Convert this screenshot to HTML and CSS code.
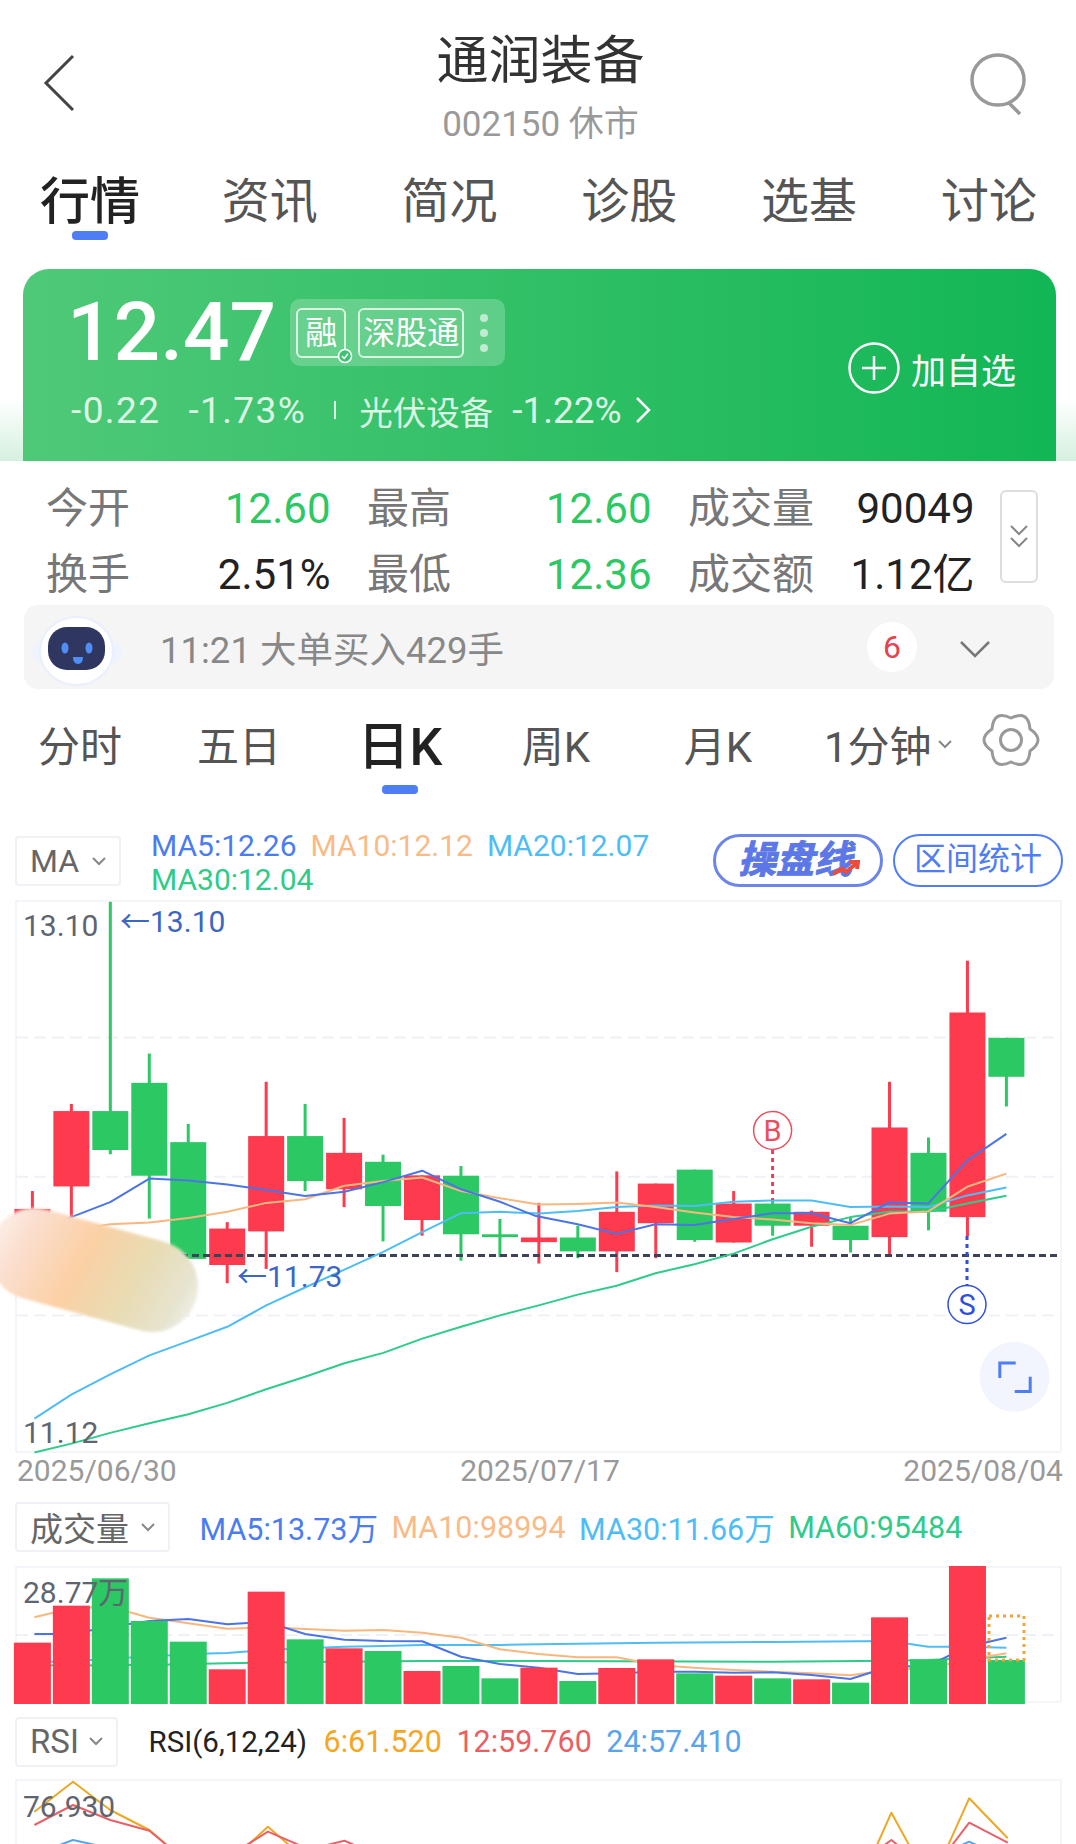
FILE: index.html
```html
<!DOCTYPE html>
<html lang="zh-CN">
<head>
    <meta charset="UTF-8">
    <meta name="viewport" content="width=device-width, initial-scale=1.0">
    <title>通润装备 002150</title>
    <link rel="stylesheet" href="styles.css">
</head>
<body>

    <!-- Title bar -->
    <header class="top-bar">
        <svg class="back-icon" width="34" height="60" viewBox="0 0 34 60">
            <polyline points="30,3 3,30 30,57" />
        </svg>
        <div class="title-box">
            <div class="title">通润装备</div>
            <div class="subtitle">002150 休市</div>
        </div>
        <svg class="search-icon" width="60" height="66" viewBox="0 0 60 66">
            <ellipse cx="28" cy="28" rx="26" ry="25" />
            <line x1="39" y1="51" x2="50" y2="62" />
        </svg>
    </header>

    <nav class="tabs">
        <div class="tab active">行情<span class="tab-line"></span></div>
        <div class="tab">资讯</div>
        <div class="tab">简况</div>
        <div class="tab">诊股</div>
        <div class="tab">选基</div>
        <div class="tab">讨论</div>
    </nav>

    <!-- Price card -->
    <section class="hero-wrap">
        <div class="hero">
            <div class="hero-left">
                <div class="price-row">
                    <div class="price">12.47</div>
                    <div class="tag-pill">
                        <span class="tag tag-rong">融
                            <svg class="tag-check" width="16" height="16" viewBox="0 0 16 16">
                                <circle cx="8" cy="8" r="6.5" />
                                <polyline points="5,8 7.2,10.4 11,5.8" />
                            </svg>
                        </span>
                        <span class="tag">深股通</span>
                        <span class="tag-dots"><i></i><i></i><i></i></span>
                    </div>
                </div>
                <div class="change-row">
                    <span class="chg">-0.22</span>
                    <span class="chg">-1.73%</span>
                    <span class="chg-sep"></span>
                    <span class="sector">光伏设备</span>
                    <span class="sector-chg">-1.22%</span>
                    <svg width="16" height="28" viewBox="0 0 16 28">
                        <polyline class="white-line" points="2,2 14,14 2,26" />
                    </svg>
                </div>
            </div>
            <div class="add-btn">
                <svg width="52" height="52" viewBox="0 0 52 52">
                    <circle class="white-line" cx="26" cy="26" r="24.5" />
                    <line class="white-line" x1="14" y1="26" x2="38" y2="26" />
                    <line class="white-line" x1="26" y1="14" x2="26" y2="38" />
                </svg>
                <span>加自选</span>
            </div>
        </div>
    </section>

    <!-- Quote numbers -->
    <section class="stats">
        <div class="stats-grid">
            <div class="stat"><span class="stat-label">今开</span><span class="down">12.60</span></div>
            <div class="stat"><span class="stat-label">最高</span><span class="down">12.60</span></div>
            <div class="stat"><span class="stat-label">成交量</span><span>90049</span></div>
            <div class="stat"><span class="stat-label">换手</span><span>2.51%</span></div>
            <div class="stat"><span class="stat-label">最低</span><span class="down">12.36</span></div>
            <div class="stat"><span class="stat-label">成交额</span><span>1.12亿</span></div>
        </div>
        <div class="stats-toggle">
            <svg width="20" height="26" viewBox="0 0 20 26">
                <polyline points="2,2 10,10 18,2" />
                <polyline points="2,14 10,22 18,14" />
            </svg>
        </div>
    </section>

    <div class="notice">
        <svg class="robot" width="92" height="92" viewBox="0 0 92 92">
            <rect class="robot-ear" x="1" y="41" width="90" height="20" rx="10" />
            <ellipse class="robot-shell" cx="45.5" cy="50" rx="36.5" ry="34" />
            <rect class="robot-head" x="17" y="26" width="57" height="43" rx="19" />
            <ellipse class="robot-eye" cx="34" cy="47" rx="3.5" ry="5.5" />
            <ellipse class="robot-eye" cx="58" cy="47" rx="3.5" ry="5.5" />
            <path class="robot-eye" d="M42 56 h10 q0 7 -5 7 q-5 0 -5 -7 z" />
        </svg>
        <span class="notice-text">11:21 大单买入429手</span>
        <span class="notice-badge">6</span>
        <svg class="notice-arrow" width="32" height="18" viewBox="0 0 32 18">
            <polyline points="2,2 16,16 30,2" />
        </svg>
    </div>

    <!-- Chart periods -->
    <nav class="periods">
        <div class="period p-min">分时</div>
        <div class="period p-five">五日</div>
        <div class="period p-day active">日K<span class="tab-line"></span></div>
        <div class="period p-week">周K</div>
        <div class="period p-month">月K</div>
        <div class="period p-one">1分钟
            <svg class="small-arrow" width="14" height="9" viewBox="0 0 14 9">
                <polyline points="1,1 7,7 13,1" />
            </svg>
        </div>
        <svg class="gear" width="60" height="60" viewBox="-30 -30 60 60">
            <path d="M19 -11 Q35 0 19 11 Q17.5 30.3 0 22 Q-17.5 30.3 -19 11 Q-35 0 -19 -11 Q-17.5 -30.3 0 -22 Q17.5 -30.3 19 -11 Z" />
            <circle r="10.5" />
        </svg>
    </nav>

    <div class="ma-row">
        <div class="picker picker-ma">MA
            <svg class="picker-arrow" width="14" height="9" viewBox="0 0 14 9"><polyline points="1,1 7,7 13,1" /></svg>
        </div>
        <div class="ma-values">
            <span class="c-blue">MA5:12.26</span>
            <span class="c-orange">MA10:12.12</span>
            <span class="c-sky">MA20:12.07</span>
            <span class="c-teal">MA30:12.04</span>
        </div>
        <div class="pill-btn pill-line">
            <span class="pill-line-text">操盘线</span>
            <svg class="pill-line-arrow" width="28" height="16" viewBox="0 0 28 16">
                <polyline points="1,14 10,9 14,12 25,3" />
                <polyline points="18,2 26,2 25,9" />
            </svg>
        </div>
        <div class="pill-btn pill-range">区间统计</div>
    </div>

    <!-- K line chart, bars and lines are added by chart.js -->
    <svg id="kline" class="chart" width="1076" height="554" viewBox="0 0 1076 554">
        <defs>
            <linearGradient id="smudgeFill" gradientUnits="userSpaceOnUse" x1="0" y1="310" x2="199" y2="420">
                <stop offset="0" stop-color="#fdf0ea" />
                <stop offset="0.15" stop-color="#fbdfd0" />
                <stop offset="0.42" stop-color="#fbd0a4" />
                <stop offset="0.68" stop-color="#e8dcb4" />
                <stop offset="0.88" stop-color="#e6e4d0" />
                <stop offset="1" stop-color="#f3f3ef" />
            </linearGradient>
            <filter id="smudgeBlur" filterUnits="userSpaceOnUse" x="-20" y="260" width="260" height="220">
                <feGaussianBlur stdDeviation="1.5" />
            </filter>
        </defs>
        <g id="klineBody"></g>
        <line class="last-price" x1="16" y1="355.4" x2="1060" y2="355.4" />
        <g id="klineLines"></g>

        <!-- Buy and sell marks -->
        <line class="mark-b" x1="772.6" y1="250" x2="772.6" y2="300" />
        <circle class="mark-b-ring" cx="772.6" cy="230.4" r="19" />
        <text class="mark-b-text" x="772.6" y="240.5">B</text>
        <line class="mark-s" x1="967" y1="336" x2="967" y2="386" />
        <circle class="mark-s-ring" cx="967" cy="404.6" r="19" />
        <text class="mark-s-text" x="967" y="414.6">S</text>

        <!-- Blurred out part of the shot -->
        <path class="smudge" d="M35 354 L152 386" />

        <text class="axis-label" x="23" y="36">13.10</text>
        <text class="axis-label" x="23" y="543">11.12</text>
        <text class="extreme-label" x="120" y="32">←13.10</text>
        <text class="extreme-label" x="237" y="387">←11.73</text>

        <circle class="expand-bg" cx="1014.6" cy="476.8" r="35" />
        <polyline class="expand-icon" points="999.8,477.9 999.8,462.9 1015.7,462.9" />
        <polyline class="expand-icon" points="1014.7,491.4 1030.2,491.4 1030.2,476.8" />
    </svg>

    <div class="dates">
        <span>2025/06/30</span>
        <span>2025/07/17</span>
        <span>2025/08/04</span>
    </div>

    <div class="ind-row vol-row">
        <div class="picker picker-vol">成交量
            <svg class="picker-arrow" width="14" height="9" viewBox="0 0 14 9"><polyline points="1,1 7,7 13,1" /></svg>
        </div>
        <span class="c-blue">MA5:13.73万</span>
        <span class="c-orange">MA10:98994</span>
        <span class="c-sky">MA30:11.66万</span>
        <span class="c-teal">MA60:95484</span>
    </div>

    <svg id="volume" class="chart" width="1076" height="140" viewBox="0 0 1076 140">
        <g id="volumeBody"></g>
        <rect class="vol-box" x="989" y="50" width="35" height="44" />
        <text class="axis-label" x="23" y="37">28.77万</text>
    </svg>

    <div class="ind-row rsi-row">
        <div class="picker picker-rsi">RSI
            <svg class="picker-arrow" width="14" height="9" viewBox="0 0 14 9"><polyline points="1,1 7,7 13,1" /></svg>
        </div>
        <span class="rsi-name">RSI(6,12,24)</span>
        <span class="c-rsi6">6:61.520</span>
        <span class="c-rsi12">12:59.760</span>
        <span class="c-rsi24">24:57.410</span>
    </div>

    <svg id="rsi" class="chart" width="1076" height="65" viewBox="0 0 1076 65">
        <g id="rsiBody"></g>
        <text class="axis-label" x="23" y="38">76.930</text>
    </svg>

    <script src="chart.js"></script>
</body>
</html>
```

FILE: styles.css
```css
* {
    box-sizing: border-box;
}
body {
    margin: 0;
    width: 1076px;
    height: 1844px;
    overflow: hidden;
    background-color: #fff;
    color: #222;
    font-family: Roboto, "Noto Sans CJK SC", sans-serif;
}
svg {
    display: block;
    flex-shrink: 0;
}
polyline, path, line, circle, ellipse {
    fill: none;
}

/* Title bar */
.top-bar {
    display: flex;
    justify-content: space-between;
    height: 145px;
    padding: 30px 46px 0 43px;
}
.back-icon {
    margin-top: 23px;
}
.back-icon polyline {
    stroke: #444;
    stroke-width: 3;
}
.search-icon {
    margin-top: 22px;
}
.search-icon ellipse, .search-icon line {
    stroke: #999;
    stroke-width: 3.5;
}
.title-box {
    flex: 1;
    text-align: center;
    margin-left: 34px;
}
.title {
    font-size: 52px;
    line-height: 64px;
    color: #333;
}
.subtitle {
    font-size: 35px;
    line-height: 40px;
    margin-top: 11px;
    color: #999;
}
.tabs {
    display: flex;
    padding-top: 28px;
    height: 95px;
}
.tab {
    flex: none;
    width: 179.8px;
    font-size: 48px;
    line-height: 58px;
    text-align: center;
    color: #555;
}
.tab.active {
    font-size: 50px;
    font-weight: 500;
    color: #222;
}
.tab-line {
    display: block;
    width: 36px;
    height: 9px;
    margin: 0 auto;
    border-radius: 4px;
    background-color: #4f7df3;
}

/* Price card */
.hero-wrap {
    padding: 29px 20px 0 23px;
    height: 221px;
    background: linear-gradient(to bottom, #fff 0, #fff 158px, #d5f1df 221px);
}
.hero {
    display: flex;
    justify-content: space-between;
    align-items: flex-start;
    height: 192px;
    padding: 30px 40px 0 48px;
    border-radius: 26px 26px 0 0;
    background: linear-gradient(to right, #4fc978, #12b654);
    color: #fff;
}
.price-row {
    display: flex;
    align-items: center;
    height: 67px;
}
.price {
    margin-left: -4px;
    font-size: 82px;
    font-weight: 500;
    line-height: 67px;
}
.tag-pill {
    display: flex;
    align-items: center;
    gap: 12px;
    height: 67px;
    margin-left: 14px;
    padding: 0 17px 0 6px;
    border-radius: 10px;
    background-color: rgba(255, 255, 255, 0.22);
}
.tag {
    position: relative;
    height: 50px;
    padding: 0 3px;
    border: 2px solid rgba(255, 255, 255, 0.75);
    border-radius: 6px;
    font-size: 32px;
    line-height: 46px;
}
.tag-rong {
    padding: 0 7px;
}
.tag-check {
    position: absolute;
    right: -9px;
    bottom: -8px;
}
.tag-check circle, .tag-check polyline {
    stroke: #fff;
    stroke-width: 1.5;
}
.tag-check circle {
    fill: #3fc172;
}
.tag-dots {
    display: flex;
    flex-direction: column;
    gap: 7px;
    margin-left: 4px;
}
.tag-dots i {
    width: 8px;
    height: 8px;
    border-radius: 50%;
    background-color: rgba(255, 255, 255, 0.6);
}
.change-row {
    display: flex;
    align-items: center;
    height: 44px;
    margin-top: 22px;
    color: #dcf6e5;
    font-size: 37px;
}
.chg {
    margin-right: 28px;
    letter-spacing: 1.4px;
}
.chg-sep {
    width: 2px;
    height: 18px;
    margin-right: 23px;
    background-color: #dcf6e5;
}
.sector {
    font-size: 33.5px;
    margin-right: 19px;
}
.sector-chg {
    margin-right: 13px;
    font-size: 37px;
}
.white-line {
    stroke: #fff;
    stroke-width: 2.5;
}
.add-btn {
    display: flex;
    align-items: center;
    gap: 11px;
    margin-top: 43px;
    font-size: 35px;
}

/* Quote numbers */
.stats {
    display: flex;
    height: 144px;
    padding: 15px 0 0 46px;
    font-size: 42px;
}
.stats-grid {
    display: grid;
    grid-template-columns: 284.5px 284.5px 286.5px;
    grid-auto-rows: 66px;
    column-gap: 36.5px;
}
.stat {
    display: flex;
    justify-content: space-between;
    line-height: 66px;
    color: #222;
}
.stat-label {
    color: #777;
    font-size: 42px;
}
.down {
    color: #2cc864;
}
.stats-toggle {
    display: flex;
    align-items: center;
    justify-content: center;
    width: 38px;
    height: 93px;
    margin: 14px 0 0 25px;
    border: 2px solid #ddd;
    border-radius: 6px;
}
.stats-toggle polyline {
    stroke: #888;
    stroke-width: 2;
}
.notice {
    display: flex;
    align-items: center;
    height: 84px;
    margin: 0 22px 0 24px;
    padding-left: 7px;
    border-radius: 14px;
    background-color: #f5f5f6;
}
.robot-ear {
    fill: #eef3fd;
}
.robot-shell {
    fill: #fff;
    stroke: #e9effc;
    stroke-width: 2;
}
.robot-head {
    fill: #2f3760;
}
.robot-eye {
    fill: #4f8ff5;
}
.notice-text {
    margin-left: 37px;
    font-size: 36.5px;
    color: #888;
}
.notice-badge {
    width: 50px;
    height: 50px;
    margin-left: auto;
    border-radius: 50%;
    background-color: #fff;
    color: #e8414f;
    font-size: 32px;
    line-height: 50px;
    text-align: center;
}
.notice-arrow {
    margin: 4px 63px 0 42px;
}
.notice-arrow polyline {
    stroke: #777;
    stroke-width: 2.5;
}

/* Chart periods */
.periods {
    display: flex;
    height: 147px;
    padding-top: 29px;
    font-size: 42px;
    color: #555;
}
.period {
    line-height: 60px;
    height: 60px;
    text-align: center;
}
.period .tab-line {
    margin-top: 7px;
}
.p-min { width: 160px; }
.p-five { width: 158px; }
.p-day {
    width: 164px;
    font-size: 52px;
    font-weight: 500;
    color: #222;
}
.p-week { width: 148px; }
.p-month { width: 176px; }
.p-one {
    display: flex;
    align-items: center;
    margin-left: 18px;
    width: 139px;
}
.small-arrow {
    margin: -8px 0 0 6px;
}
.small-arrow polyline {
    stroke: #888;
    stroke-width: 2;
}
.gear {
    margin: -8px 0 0 18px;
}
.gear path, .gear circle {
    stroke: #999;
    stroke-width: 3;
}

/* Indicator headers */
.ma-row {
    display: flex;
    align-items: flex-start;
    height: 64px;
    padding: 0 13px 0 15px;
}
.picker {
    display: flex;
    align-items: center;
    justify-content: space-between;
    height: 50px;
    padding: 0 13px 0 13px;
    border: 2px solid #f0f1f4;
    border-radius: 4px;
    font-size: 32px;
    color: #666;
}
.picker-arrow polyline {
    stroke: #888;
    stroke-width: 2;
}
.picker-ma { width: 106px; }
.picker-vol { width: 155px; }
.picker-rsi { width: 103px; }
.ma-values {
    display: flex;
    flex-wrap: wrap;
    column-gap: 14px;
    width: 510px;
    margin: -7px 0 0 30px;
    font-size: 30px;
    line-height: 34px;
}
.pill-btn {
    position: relative;
    height: 53px;
    margin-top: -2px;
    border-radius: 27px;
    text-align: center;
    line-height: 47px;
}
.pill-line {
    width: 170px;
    margin-left: auto;
    border: 3px solid #6d85e8;
    color: #5c78e6;
    font-size: 38px;
    font-weight: 700;
}
.pill-line-text {
    display: inline-block;
    transform: skewX(-14deg);
    -webkit-text-stroke: 1px #5c78e6;
}
.pill-line-arrow {
    position: absolute;
    top: 23px;
    right: 20px;
}
.pill-line-arrow polyline {
    stroke: #ee4b3a;
    stroke-width: 4;
}
.pill-range {
    width: 170px;
    margin-left: 10px;
    border: 2px solid #4f7df3;
    color: #4f7df3;
    font-size: 32px;
}
.c-blue { color: #4b7cf0; }
.c-orange { color: #f8bb88; }
.c-sky { color: #4fbdf5; }
.c-teal { color: #2ecb8a; }
.dates {
    display: flex;
    justify-content: space-between;
    height: 49px;
    padding: 0 13px 0 17px;
    font-size: 30px;
    line-height: 34px;
    color: #999;
}
.ind-row {
    display: flex;
    align-items: center;
    gap: 14.5px;
    height: 63px;
    padding: 0 0 15px 15px;
    font-size: 30.5px;
}
.vol-row {
    gap: 13.5px;
}
.rsi-row {
    height: 62px;
    margin-top: 11px;
    padding-bottom: 13px;
}
.ind-row .picker {
    margin-right: 16px;
    font-size: 33px;
    flex-shrink: 0;
}
.rsi-name {
    font-size: 29.5px;
    color: #222;
    margin-right: 2px;
}
.c-rsi6 { color: #f5a623; }
.c-rsi12 { color: #ea5f64; }
.c-rsi24 { color: #5aa5ea; }

/* Chart drawing */
.chart text {
    font-family: Roboto, "Noto Sans CJK SC", sans-serif;
}
.frame {
    stroke: #f0f2f6;
    stroke-width: 1.5;
}
.grid-line {
    stroke: #eef1f6;
    stroke-width: 2;
    stroke-dasharray: 12 6;
}
.ma-line {
    fill: none;
    stroke-width: 2;
    stroke-linejoin: round;
}
.last-price {
    stroke: #3c4258;
    stroke-width: 3;
    stroke-dasharray: 7 4;
}
.mark-b {
    stroke: #e8405a;
    stroke-width: 3;
    stroke-dasharray: 4 4;
}
.mark-b-ring {
    fill: #fff;
    stroke: #e8505f;
    stroke-width: 1.5;
}
.mark-b-text {
    fill: #e8505f;
    font-size: 29px;
    text-anchor: middle;
}
.mark-s {
    stroke: #2f4fdc;
    stroke-width: 3;
    stroke-dasharray: 4 4;
}
.mark-s-ring {
    fill: #fff;
    stroke: #2f4fdc;
    stroke-width: 1.5;
}
.mark-s-text {
    fill: #2f4fdc;
    font-size: 29px;
    text-anchor: middle;
}
.smudge {
    stroke: url(#smudgeFill);
    stroke-width: 92;
    stroke-linecap: round;
    filter: url(#smudgeBlur);
}
.axis-label {
    fill: #5f6570;
    font-size: 30px;
}
.extreme-label {
    fill: #3c66c4;
    font-size: 30px;
}
.expand-bg {
    fill: #f2f5fd;
}
.expand-icon {
    stroke: #4f7df3;
    stroke-width: 3;
}
.vol-box {
    fill: none;
    stroke: #f2a33a;
    stroke-width: 3;
    stroke-dasharray: 3 4;
}
```

FILE: chart.js
```js
const NS = 'http://www.w3.org/2000/svg';
const RED = '#fd3a4e';
const GREEN = '#2cc864';
const LINE_BLUE = '#4b74e6';
const LINE_ORANGE = '#f7b77f';
const LINE_SKY = '#4fbdf5';
const LINE_TEAL = '#2ecb8a';

function add(parent, tag, attrs) {
    const el = document.createElementNS(NS, tag);
    for (const key in attrs) {
        el.setAttribute(key, attrs[key]);
    }
    parent.appendChild(el);
    return el;
}

// Points are sampled off the chart, x is 1/2.904 of a pixel
const toX = x => x / 2.904;
const shift = pts => pts.map(p => [p[0] + 1556.5, p[1]]);

function drawLine(parent, pts, color, yOf) {
    add(parent, 'polyline', {
        class: 'ma-line',
        stroke: color,
        points: pts.map(p => toX(p[0]).toFixed(1) + ',' + yOf(p[1]).toFixed(1)).join(' ')
    });
}

function drawFrame(parent, top, bottom) {
    add(parent, 'line', { class: 'frame', x1: 16, y1: top, x2: 16, y2: bottom });
    add(parent, 'line', { class: 'frame', x1: 1061, y1: top, x2: 1061, y2: bottom });
    add(parent, 'line', { class: 'frame', x1: 16, y1: top + 1, x2: 1061, y2: top + 1 });
}

function barX(i) {
    return 32.4 + 38.96 * i;
}

// K line: [wick top, body top, body bottom, wick bottom, colour]
const candles = [
    [815, 865, 965, 1000, RED],
    [571, 591, 802, 890, RED],
    [5, 591, 700, 712, GREEN],
    [430, 512, 772, 892, GREEN],
    [627, 678, 1005, 1005, GREEN],
    [902, 920, 1022, 1073, RED],
    [509, 661, 928, 1033, RED],
    [571, 661, 787, 815, GREEN],
    [610, 708, 810, 860, RED],
    [713, 733, 857, 956, GREEN],
    [771, 771, 896, 940, RED],
    [745, 772, 936, 1010, GREEN],
    [893, 936, 944, 1000, GREEN],
    [848, 945, 958, 1018, RED],
    [912, 945, 984, 1003, GREEN],
    [760, 873, 984, 1042, RED],
    [794, 794, 905, 1003, RED],
    [755, 755, 952, 957, GREEN],
    [815, 850, 959, 959, RED],
    [840, 850, 912, 940, GREEN],
    [870, 873, 912, 971, RED],
    [890, 912, 952, 987, GREEN],
    [509, 637, 944, 995, RED],
    [665, 708, 873, 925, GREEN],
    [170, 315, 888, 942, RED],
    [386, 386, 495, 578, GREEN]
];

const klineMa5 = [[94, 925], [207, 888], [320, 846], [434, 780], [547, 785], [660, 797], [773, 812], [886, 829], [1000, 817], [1113, 790], [1226, 758], [1339, 810], [1452, 845]]
    .concat(shift([[0, 885], [121, 908], [234, 935], [347, 908], [460, 910], [574, 893], [687, 877], [800, 877], [913, 905], [1026, 847], [1139, 850], [1252, 730], [1366, 655]]));
const klineMa10 = [[94, 950], [207, 925], [320, 908], [434, 903], [547, 890], [660, 873], [773, 848], [886, 838], [1000, 800], [1113, 787], [1226, 777], [1339, 815], [1452, 835]]
    .concat(shift([[8, 853], [121, 851], [234, 847], [347, 860], [460, 875], [574, 888], [687, 895], [800, 905], [913, 910], [1026, 878], [1139, 872], [1252, 803], [1366, 766]]));
const klineMa20 = [[100, 1452], [207, 1385], [320, 1328], [434, 1275], [547, 1235], [660, 1195], [773, 1135], [886, 1085], [1000, 1035], [1113, 985], [1226, 930], [1339, 877], [1452, 873]]
    .concat(shift([[8, 878], [121, 871], [234, 860], [347, 855], [460, 857], [574, 845], [687, 841], [800, 841], [913, 860], [1026, 858], [1139, 860], [1252, 827], [1366, 805]]));
const klineMa30 = [[100, 1547], [207, 1522], [320, 1492], [434, 1465], [547, 1440], [660, 1408], [773, 1370], [886, 1335], [1000, 1297], [1113, 1268], [1226, 1228], [1339, 1195], [1452, 1163]]
    .concat(shift([[8, 1135], [121, 1105], [234, 1080], [347, 1045], [460, 1020], [574, 990], [687, 950], [800, 915], [913, 888], [1026, 873], [1139, 873], [1252, 850], [1366, 828]]));

function drawKline() {
    const body = document.getElementById('klineBody');
    const lines = document.getElementById('klineLines');
    const yOf = y => y / 2.8;

    drawFrame(body, 0, 552);
    add(body, 'line', { class: 'frame', x1: 16, y1: 552, x2: 1061, y2: 552 });
    [137.5, 276.8, 415.4].forEach(y => {
        add(body, 'line', { class: 'grid-line', x1: 16, y1: y, x2: 1061, y2: y });
    });

    candles.forEach((c, i) => {
        const x = barX(i);
        add(body, 'rect', { x: x - 1.5, y: yOf(c[0]), width: 3, height: yOf(c[3]) - yOf(c[0]), fill: c[4] });
        add(body, 'rect', { x: x - 18, y: yOf(c[1]), width: 36, height: yOf(c[2]) - yOf(c[1]), fill: c[4] });
    });

    drawLine(lines, klineMa30, LINE_TEAL, yOf);
    drawLine(lines, klineMa20, LINE_SKY, yOf);
    drawLine(lines, klineMa10, LINE_ORANGE, yOf);
    drawLine(lines, klineMa5, LINE_BLUE, yOf);
}

// Volume: bar tops
const volTops = [458, 347, 265, 393, 455, 538, 305, 448, 475, 483, 543, 528, 565, 533, 573, 534, 508, 550, 557, 565, 568, 578, 382, 508, 226, 510];
const volColors = [RED, RED, GREEN, GREEN, GREEN, RED, RED, GREEN, RED, GREEN, RED, GREEN, GREEN, RED, GREEN, RED, RED, GREEN, RED, GREEN, RED, GREEN, RED, GREEN, RED, GREEN];

const volMa5 = [[100, 432], [207, 432], [320, 410], [434, 393], [547, 387], [660, 403], [773, 395], [886, 432], [1000, 449], [1113, 453], [1226, 454], [1339, 500], [1452, 522]]
    .concat(shift([[8, 533], [121, 552], [234, 550], [347, 545], [460, 545], [574, 548], [687, 547], [800, 555], [913, 567], [1026, 530], [1139, 528], [1252, 470], [1366, 443]]));
const volMa10 = [[100, 382], [207, 355], [320, 350], [434, 383], [547, 400], [660, 416], [773, 412], [886, 417], [1000, 422], [1113, 420], [1226, 428], [1339, 443], [1452, 478]]
    .concat(shift([[8, 492], [121, 502], [234, 502], [347, 525], [460, 533], [574, 540], [687, 545], [800, 550], [913, 556], [1026, 540], [1139, 535], [1252, 510], [1366, 490]]));
const volMa30 = [[100, 515], [207, 515], [320, 505], [434, 500], [547, 492], [660, 489], [773, 480], [886, 475], [1000, 470], [1113, 468], [1226, 465], [1452, 465]]
    .concat(shift([[8, 463], [234, 460], [347, 458], [687, 456], [1026, 453], [1139, 470], [1252, 470], [1366, 473]]));
const volMa60 = [[100, 525], [207, 527], [320, 525], [434, 525], [547, 522], [660, 520], [773, 518], [886, 516], [1226, 513]]
    .concat(shift([[8, 513], [687, 515], [1026, 512], [1139, 510], [1252, 505], [1366, 500]]));

function drawVolume() {
    const body = document.getElementById('volumeBody');
    const yOf = y => y / 3 - 76;

    drawFrame(body, 0, 136);
    add(body, 'line', { class: 'frame', x1: 16, y1: 136, x2: 1061, y2: 136 });
    add(body, 'line', { class: 'grid-line', x1: 16, y1: 69, x2: 1061, y2: 69 });

    drawLine(body, volMa60, LINE_TEAL, yOf);
    drawLine(body, volMa30, LINE_SKY, yOf);
    drawLine(body, volMa10, LINE_ORANGE, yOf);
    drawLine(body, volMa5, LINE_BLUE, yOf);

    volTops.forEach((top, i) => {
        add(body, 'rect', { x: barX(i) - 18.5, y: yOf(top), width: 37, height: 138 - yOf(top), fill: volColors[i] });
    });
}

// RSI, only the tops of the lines are on screen
function drawRsi() {
    const body = document.getElementById('rsiBody');
    const yOf = y => y / 3 - 289;
    const ORANGE = '#eda823';
    const PINK = '#e8606a';
    const SKY = '#5aa5ea';

    drawFrame(body, 0, 65);
    drawLine(body, [[100, 965], [212, 875], [320, 960], [434, 1020], [490, 1070]], ORANGE, yOf);
    drawLine(body, [[715, 1070], [778, 1010], [845, 1070]], ORANGE, yOf);
    drawLine(body, shift([[988, 1070], [1032, 968], [1086, 1070]]), ORANGE, yOf);
    drawLine(body, shift([[1195, 1070], [1258, 925], [1370, 1045]]), ORANGE, yOf);

    drawLine(body, [[100, 1005], [212, 945], [320, 990], [434, 1022], [490, 1070]], PINK, yOf);
    drawLine(body, [[708, 1070], [778, 1025], [880, 1070]], PINK, yOf);
    drawLine(body, [[930, 1070], [1000, 1052], [1040, 1070]], PINK, yOf);
    drawLine(body, shift([[1005, 1070], [1032, 1050], [1056, 1070]]), PINK, yOf);
    drawLine(body, shift([[1205, 1070], [1258, 998], [1370, 1058]]), PINK, yOf);

    drawLine(body, [[160, 1070], [212, 1050], [300, 1070]], SKY, yOf);
    drawLine(body, shift([[1225, 1070], [1258, 1055], [1290, 1070]]), SKY, yOf);
}

drawKline();
drawVolume();
drawRsi();
```
